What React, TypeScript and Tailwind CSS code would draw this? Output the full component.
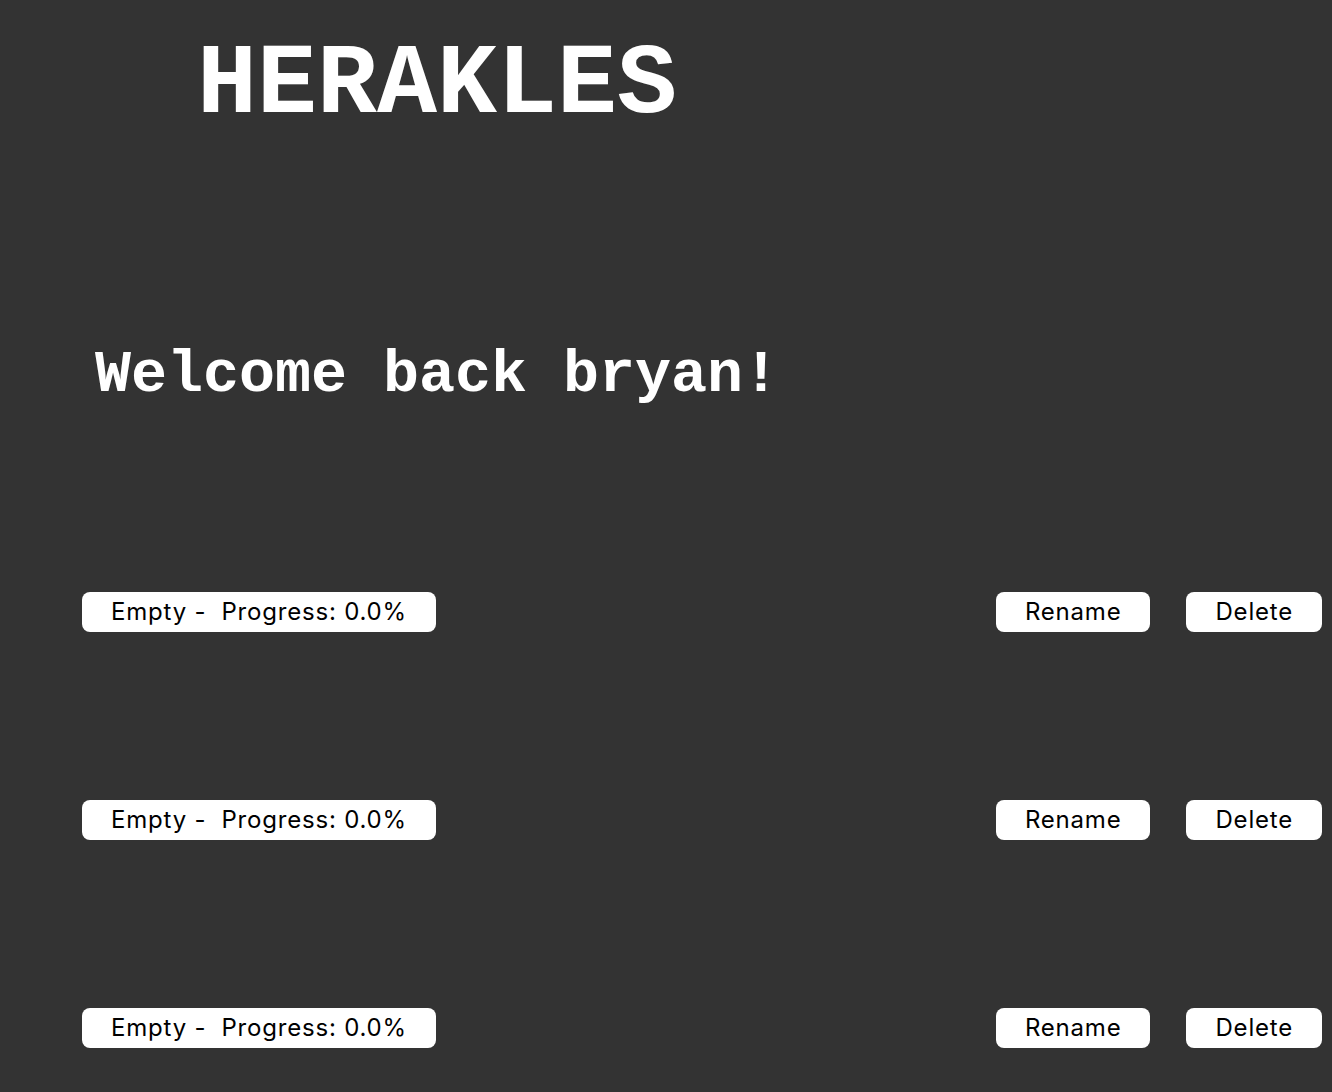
const slots = [
  { name: "Empty", progress: 0 },
  { name: "Empty", progress: 0 },
  { name: "Empty", progress: 0 },
];

function PillButton({ children }: { children: React.ReactNode }) {
  return (
    <button className="h-10 px-[29px] rounded-lg bg-white text-black text-[24px] tracking-[0.8px] font-['Inter',sans-serif] leading-none whitespace-pre">
      {children}
    </button>
  );
}

export default function App() {
  return (
    <div className="min-h-screen w-full bg-[#333333] overflow-hidden">
      <h1 className="pt-[36px] pl-[197px] text-[100px] leading-none text-white font-bold font-['Liberation_Mono','Courier_New',monospace]">
        HERAKLES
      </h1>

      <h2 className="mt-[209px] pl-[95px] text-[60px] leading-none text-white font-bold font-['Liberation_Mono','Courier_New',monospace]">
        Welcome back bryan!
      </h2>

      <div className="mt-[187px] flex flex-col gap-[168px] pl-[82px] pr-[10px]">
        {slots.map((slot, i) => (
          <div key={i} className="flex items-center justify-between">
            <PillButton>
              {`${slot.name} -  Progress: ${slot.progress.toFixed(1)}%`}
            </PillButton>
            <div className="flex gap-9">
              <PillButton>Rename</PillButton>
              <PillButton>Delete</PillButton>
            </div>
          </div>
        ))}
      </div>
    </div>
  );
}
